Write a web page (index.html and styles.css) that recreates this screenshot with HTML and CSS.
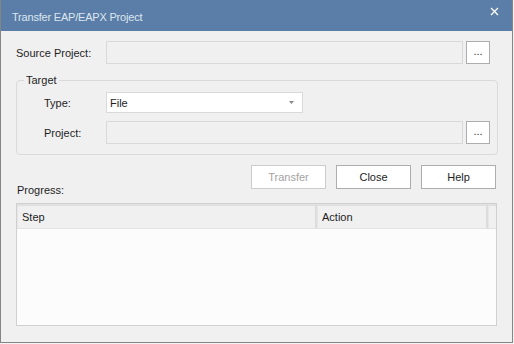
FILE: index.html
```html
<!DOCTYPE html>
<html>
<head>
    <meta charset="utf-8">
    <title>Transfer EAP/EAPX Project</title>
    <link rel="stylesheet" href="styles.css">
</head>
<body>
    <div class="window">
        <div class="titlebar">
            <span class="title">Transfer EAP/EAPX Project</span>
            <span class="close-x">
                <svg width="9" height="9" viewBox="0 0 9 9"><path d="M1 1 L8 8 M8 1 L1 8" stroke="#fff" stroke-width="1.3"/></svg>
            </span>
        </div>

        <div class="content">
            <div class="row top-row">
                <span class="label">Source Project:</span>
                <div class="field disabled"></div>
                <button class="browse">...</button>
            </div>

            <fieldset class="group">
                <legend>Target</legend>
                <div class="row">
                    <span class="label sub">Type:</span>
                    <div class="select">
                        <span>File</span>
                        <svg width="5" height="3" viewBox="0 0 5 3"><path d="M0 0 H5 L2.5 3 Z" fill="#888"/></svg>
                    </div>
                </div>
                <div class="row project-row">
                    <span class="label sub">Project:</span>
                    <div class="field disabled"></div>
                    <button class="browse">...</button>
                </div>
            </fieldset>

            <div class="actions">
                <span class="progress-label">Progress:</span>
                <div class="buttons">
                    <button class="btn" disabled>Transfer</button>
                    <button class="btn">Close</button>
                    <button class="btn">Help</button>
                </div>
            </div>

            <div class="list">
                <div class="list-head">
                    <div class="col step">Step</div>
                    <div class="col action">Action</div>
                    <div class="col filler"></div>
                </div>
                <div class="list-body"></div>
            </div>
        </div>
    </div>
</body>
</html>
```

FILE: styles.css
```css
body, html {
    margin: 0;
    padding: 0;
    background: #f4f4f4;
    font-family: "Liberation Sans", Arial, sans-serif;
    font-size: 11px;
    color: #1e1e1e;}

.window {
    box-sizing: border-box;
    width: 513px;
    height: 343px;
    border: 1px solid #858585;
    border-top: none;
    background: #f0f0f0;
    display: flex;
    flex-direction: column;}

.titlebar {
    height: 31px;
    background: #5a7ea7;
    display: flex;
    align-items: center;
    justify-content: space-between;
    padding: 2px 13px 0 11px;
    box-sizing: border-box;}

.title {
    color: #dde6f0;
    font-size: 11px;
    letter-spacing: -0.2px;}

.close-x {
    display: flex;
    margin-top: -10px;}

.content {
    padding: 10px 15px 0 15px;
    display: flex;
    flex-direction: column;}

.row {
    display: flex;
    align-items: center;}

.label {
    width: 90px;
    flex: none;}

.label.sub {
    width: 62px;}

.field {
    box-sizing: border-box;
    width: 357px;
    height: 23px;
    border: 1px solid #d9d9d9;
    background: #f0f0f0;}

.browse {
    box-sizing: border-box;
    width: 24px;
    height: 23px;
    margin-left: 3px;
    padding: 0 0 4px 0;
    border: 1px solid #adadad;
    background: #fff;
    font-family: inherit;
    font-size: 11px;
    color: #333;}

.group {
    margin: 10px 0 0 0;
    padding: 5px 7px 10px 27px;
    border: 1px solid #dadada;
    border-radius: 4px;}

.group legend {
    padding: 0 2px;
    margin-left: -20px;
    line-height: 13px;}

.select {
    box-sizing: border-box;
    width: 197px;
    height: 21px;
    border: 1px solid #d9d9d9;
    background: #fff;
    display: flex;
    align-items: center;
    justify-content: space-between;
    padding: 0 8px 0 3px;}

.project-row {
    margin-top: 8px;}

.actions {
    display: flex;
    justify-content: space-between;
    align-items: flex-end;
    margin-top: 10px;
    padding-right: 1px;}

.progress-label {
    margin-left: 1px;
    margin-bottom: -7px;}

.buttons {
    display: flex;
    gap: 10px;}

.btn {
    box-sizing: border-box;
    width: 75px;
    height: 24px;
    border: 1px solid #adadad;
    background: #fff;
    font-family: inherit;
    font-size: 11px;
    color: #1e1e1e;
    padding: 0;}

.btn:disabled {
    border-color: #cccccc;
    color: #a3a3a3;}

.list {
    box-sizing: border-box;
    width: 481px;
    height: 123px;
    margin-top: 14px;
    border: 1px solid #d0d0d0;
    background: #fcfcfc;
    display: flex;
    flex-direction: column;}

.list-head {
    display: flex;
    height: 24px;
    background: #f0f0f0;
    border-bottom: 1px solid #e3e3e3;}

.col {
    box-sizing: border-box;
    display: flex;
    align-items: center;
    padding-left: 4px;
    border-right: 2px solid #dcdcdc;
    border-top: 2px solid #e0e0e0;
    border-left: 1px solid #e6e6e6;}

.step {
    width: 300px;}

.action {
    width: 171px;}

.filler {
    flex: 1;
    border-right: none;}

.list-body {
    flex: 1;}
```
